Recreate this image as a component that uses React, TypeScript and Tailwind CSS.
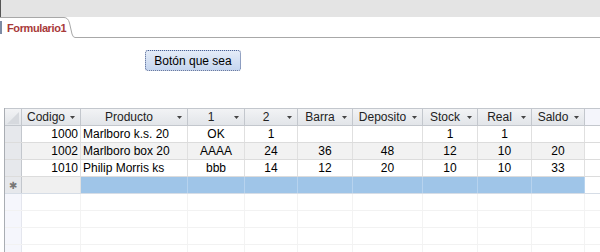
import React from 'react'

// ── Data ──────────────────────────────────────────────────────

type Col = { key: string; label: string; w: string; align: 'left' | 'right' | 'center' }

const COLS: Col[] = [
  { key: 'codigo',   label: 'Codigo',   w: 'w-[59px]',  align: 'right' },
  { key: 'producto', label: 'Producto', w: 'w-[107px]', align: 'left' },
  { key: 'c1',       label: '1',        w: 'w-[57px]',  align: 'center' },
  { key: 'c2',       label: '2',        w: 'w-[53px]',  align: 'center' },
  { key: 'barra',    label: 'Barra',    w: 'w-[55px]',  align: 'center' },
  { key: 'deposito', label: 'Deposito', w: 'w-[70px]',  align: 'center' },
  { key: 'stock',    label: 'Stock',    w: 'w-[55px]',  align: 'center' },
  { key: 'real',     label: 'Real',     w: 'w-[54px]',  align: 'center' },
  { key: 'saldo',    label: 'Saldo',    w: 'w-[53px]',  align: 'center' },
]

const ROWS: Record<string, string>[] = [
  { codigo: '1000', producto: 'Marlboro k.s. 20', c1: 'OK',   c2: '1',  barra: '',   deposito: '',   stock: '1',  real: '1',  saldo: '' },
  { codigo: '1002', producto: 'Marlboro box 20',  c1: 'AAAA', c2: '24', barra: '36', deposito: '48', stock: '12', real: '10', saldo: '20' },
  { codigo: '1010', producto: 'Philip Morris ks', c1: 'bbb',  c2: '14', barra: '12', deposito: '20', stock: '10', real: '10', saldo: '33' },
]

const ALIGN = {
  left: 'justify-start pl-[2px]',
  right: 'justify-end pr-[2px]',
  center: 'justify-center',
}

function Arrow() {
  return (
    <svg width="5" height="3" viewBox="0 0 5 3" className="shrink-0">
      <path d="M0 0 H5 L2.5 3 Z" fill="#444" />
    </svg>
  )
}

// ── Component ─────────────────────────────────────────────────

export default function App() {
  return (
    <div className="w-[600px] h-[252px] overflow-hidden bg-white text-[12px] text-black" style={{ fontFamily: '"Liberation Sans", Arial, sans-serif' }}>
      {/* Top strip */}
      <div className="h-[17px] bg-[#e4e4e4] border-l border-[#555]" />

      {/* Tab row */}
      <div className="flex h-[21px]">
        <div className="relative w-[64px] bg-white border-t border-[#a8a8a8] flex items-center pl-[7px]">
          <div className="absolute left-0 top-[3px] w-[2px] h-[13px] bg-[#7d8ba4]" />
          <span className="text-[11px] font-bold text-[#a83a3a] tracking-[-0.4px]">Formulario1</span>
        </div>
        <svg width="11" height="21" viewBox="0 0 11 21" className="shrink-0">
          <path d="M0 0.5 Q4 0.5 5.5 6 L8 17 Q9 20.5 11 20.5" fill="none" stroke="#a8a8a8" strokeWidth="1" />
        </svg>
        <div className="flex-1 border-b border-[#a8a8a8]" />
      </div>

      {/* Form body */}
      <div className="pl-[145px] pt-[12px]">
        <div className="w-[96px] h-[21px] rounded-[3px] border border-dotted border-[#4b5f8f] bg-gradient-to-b from-[#e4ecf8] to-[#c6d6ef] flex items-center justify-center text-[12px]">
          Botón que sea
        </div>
      </div>

      {/* Datasheet */}
      <div className="mt-[37px] ml-[4px] border-l border-[#a9adb3]">
        {/* Header */}
        <div className="flex h-[18px] border-t border-b border-[#c3c7cd]">
          <div className="w-[17px] shrink-0 bg-gradient-to-b from-[#f2f3f5] to-[#e2e5e9] border-r border-[#c3c7cd] relative">
            <svg width="14" height="14" viewBox="0 0 14 14" className="absolute left-[1px] top-[2px]">
              <path d="M1 13 L13 1 L13 13 Z" fill="#d6d9de" />
            </svg>
          </div>
          {COLS.map(c => (
            <div key={c.key} className={`${c.w} shrink-0 flex items-center bg-gradient-to-b from-[#f2f3f5] to-[#e2e5e9] border-r border-[#c3c7cd] pr-[5px]`}>
              <span className="flex-1 text-center text-[#222]">{c.label}</span>
              <Arrow />
            </div>
          ))}
          <div className="flex-1 bg-[#f4f5fb]" />
        </div>

        {/* Data rows */}
        {ROWS.map((r, i) => (
          <div key={r.codigo} className={`flex h-[17px] border-b border-[#dcdcdc] ${i === 1 ? 'bg-[#f2f2f2]' : 'bg-white'}`}>
            <div className="w-[17px] shrink-0 bg-[#e6e8ec] border-r border-[#c3c7cd]" />
            {COLS.map(c => (
              <div key={c.key} className={`${c.w} shrink-0 flex items-center border-r border-[#e0e0e0] ${ALIGN[c.align]}`}>
                {r[c.key]}
              </div>
            ))}
            <div className="flex-1 bg-white" />
          </div>
        ))}

        {/* New record row */}
        <div className="flex h-[17px] border-b border-[#d6dde6]">
          <div className="w-[17px] shrink-0 bg-[#e6e8ec] border-r border-[#c3c7cd] flex items-center justify-center text-[10px] text-[#777]">✱</div>
          {COLS.map((c, i) => (
            <div key={c.key} className={`${c.w} shrink-0 border-r ${i === 0 ? 'bg-[#f0f0f0] border-[#e0e0e0]' : 'bg-[#9fc5e8] border-[#b7d3ee]'}`} />
          ))}
          <div className="flex-1 bg-white" />
        </div>

        {/* Empty area */}
        {[0, 1, 2, 3].map(n => (
          <div key={n} className="flex h-[17px] border-b border-[#f2f2f2]">
            <div className="w-[17px] shrink-0 bg-[#f5f6fc] border-r border-[#e4e6ee]" />
            {COLS.map(c => (
              <div key={c.key} className={`${c.w} shrink-0 border-r border-[#f3f3f3]`} />
            ))}
            <div className="flex-1" />
          </div>
        ))}
      </div>
    </div>
  )
}
